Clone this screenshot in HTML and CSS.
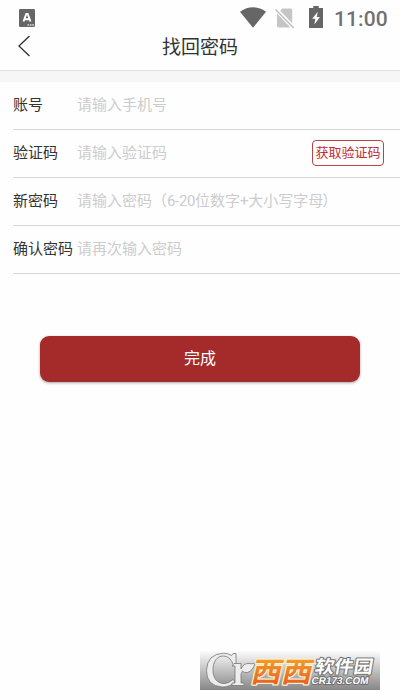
FILE: index.html
```
<!DOCTYPE html>
<html lang="zh-CN">
<head>
<meta charset="utf-8">
<title>找回密码</title>
<link rel="stylesheet" href="styles.css">
</head>
<body>
<div class="screen">
  <div class="status">
    <svg class="app-icon" width="16" height="18" viewBox="0 0 16 18"><rect width="16" height="18" rx="1.2" fill="#666"/><path d="M4.5 12.5 7.3 5h1.4l2.8 7.5M5.5 10.3h5" fill="none" stroke="#fff" stroke-width="1.9"/><path d="M8.5 16h1.6m.8 0h1.6m.8 0h1.6" stroke="#ddd" stroke-width="1.5"/></svg>
    <div class="indicators">
      <svg class="wifi" width="26" height="21" viewBox="0 0 26 21"><path d="M0 4.7Q13-4.1 26 4.7L13 20.8Z" fill="#666"/></svg>
      <svg class="sim" width="20" height="21" viewBox="0 0 20 21"><path d="M7.2.5H15.500q1.700 0 1.700 1.700v13L5.200 2.800ZM2 5.600 15.500 19.400H3.700Q2 19.400 2 17.700Z" fill="#c5c5c5"/><path d="M.5 1.500 18.700 20" stroke="#bbb" stroke-width="1.300"/></svg>
      <svg class="battery" width="14" height="22" viewBox="0 0 14 22"><path d="M4.3 0h5.4v2H14v20H0V2h4.300Z" fill="#666"/><path d="M8.800 5.700 3.200 12.700h3.100l-.9 5.800 5.500-7.400H7.800Z" fill="#fff"/></svg>
      <span class="time">11:00</span>
    </div>
  </div>
  <header class="nav">
    <svg class="back" width="14" height="22" viewBox="0 0 14 22"><path d="M11.5 0 .9 10 11.5 20" fill="none" stroke="#333" stroke-width="1.4"/></svg>
    <h1 class="title">找回密码</h1>
  </header>
  <div class="divider"></div>
  <form class="form">
    <label class="row"><span class="label">账号</span><span class="hint">请输入手机号</span></label>
    <label class="row"><span class="label">验证码</span><span class="hint">请输入验证码</span><span class="code">获取验证码</span></label>
    <label class="row"><span class="label">新密码</span><span class="hint">请输入密码（<span class="digits">6-20</span>位数字<span class="digits">+</span>大小写字母<span class="close">）</span></span></label>
    <label class="row"><span class="label">确认密码</span><span class="hint">请再次输入密码</span></label>
    <button class="submit" type="button">完成</button>
  </form>
  <svg class="watermark" width="180" height="40" viewBox="0 0 180 40">
    <defs>
      <linearGradient id="shade" x2="0" y2="1"><stop offset="0" stop-color="#fff"/><stop offset="1" stop-color="#868686"/></linearGradient>
      <linearGradient id="orange" x2="0" y2="1"><stop offset="0" stop-color="#f5b52e"/><stop offset="1" stop-color="#e65420"/></linearGradient>
    </defs>
    <rect width="180" height="40" fill="url(#shade)"/>
    <g class="emblem">
      <path d="M36 3.500V15h-2.500Q30 6 23.500 6C16.500 6 13 12 13 20s4 13.500 11 13.500q5 0 9-4l2 2.500Q30 37 22.500 37 6.500 36 6.500 20.500 7 4 23.500 3.200q4.500 0 8 2.300L33 3.500Z"/>
      <path d="M34 13.500h7V19q2.500-6 8-5.500 2.500.8 6-.5-2 8-7.500 9.500-4 .5-5-1.500l-1.500 3V33h3v2.500H32V33h3V16h-3Z"/>
    </g>
    <text class="west" transform="translate(50 31.500) skewX(-13)" font-size="28" textLength="61" lengthAdjust="spacingAndGlyphs">西西</text>
    <text class="park" transform="translate(114 23) skewX(-10)" font-size="18" textLength="58" lengthAdjust="spacingAndGlyphs">软件园</text>
    <text class="domain" transform="translate(111 33.500) skewX(-10)" font-size="10" textLength="57" lengthAdjust="spacingAndGlyphs">CR173.COM</text>
  </svg>
</div>
</body>
</html>
```
FILE: styles.css
```
* { box-sizing: border-box; }
body {
  margin: 0;
  background: #fefefe;
  color: #333;
  font-family: Roboto, "Noto Sans CJK SC", sans-serif;
}
.screen {
  display: flex;
  flex-direction: column;
  height: 700px;
}
.status {
  display: flex;
  justify-content: space-between;
  height: 32px;
  padding: 0 12px 0 19px;
}
.app-icon { margin-top: 9px; }
.indicators { display: flex; align-items: flex-start; }
.wifi { margin-top: 7px; }
.sim { margin: 8px 0 0 9px; }
.battery { margin: 6px 0 0 14px; }
.time {
  width: 54px;
  margin-left: 11px;
  padding-top: 7px;
  color: #707070;
  font-size: 21px;
  font-weight: 500;
  line-height: 25px;
  letter-spacing: .1px;
  white-space: nowrap;
}
.nav {
  display: grid;
  grid-template-columns: 14px 1fr 14px;
  align-items: center;
  height: 39px;
  padding: 0 18px 10px;
  border-bottom: 1px solid #e0e0e0;
}
.title {
  margin: 0;
  padding-top: 2px;
  font-size: 19px;
  font-weight: 400;
  line-height: 28px;
  text-align: center;
}
.divider { height: 11px; background: #f6f6f6; }
.form { display: flex; flex-direction: column; }
.row {
  display: flex;
  align-items: center;
  height: 48px;
  margin-left: 13px;
  padding: 0 16px 2px 0;
  border-bottom: 1px solid #d6d6d6;
  font-size: 15px;
  line-height: 22px;
  white-space: nowrap;
}
.label { width: 64px; }
.hint { flex: 1; color: #ccc; }
.digits { letter-spacing: -.35px; }
.close { margin-left: -1px; }
.code {
  width: 72px;
  height: 26px;
  border: 1px solid #b84448;
  border-radius: 4px;
  color: #c52b34;
  font-size: 13px;
  line-height: 24px;
  text-align: center;
}
.submit {
  height: 46px;
  margin: 62px 40px 0;
  padding: 0;
  border: 0;
  border-radius: 9px;
  background: #a52a2a;
  box-shadow: 0 1px 3px rgba(0, 0, 0, .35);
  color: #fff;
  font: 400 16px/46px Roboto, "Noto Sans CJK SC", sans-serif;
}
.watermark { margin: auto 20px 10px auto; }
.emblem {
  fill: #ededed;
  stroke: #777;
  stroke-width: .8px;
  stroke-linejoin: round;
}
.west, .park {
  font-family: "Noto Sans CJK SC", sans-serif;
  font-weight: 700;
  paint-order: stroke;
  stroke-linejoin: round;
}
.west { fill: url(#orange); stroke: #fff0cf; stroke-width: 2.5px; }
.park { fill: #fff; stroke: #737373; stroke-width: 2px; }
.domain {
  fill: #fff;
  stroke: #666;
  stroke-width: 1.6px;
  paint-order: stroke;
  font-family: "Liberation Sans", sans-serif;
  font-weight: 700;
}
```
